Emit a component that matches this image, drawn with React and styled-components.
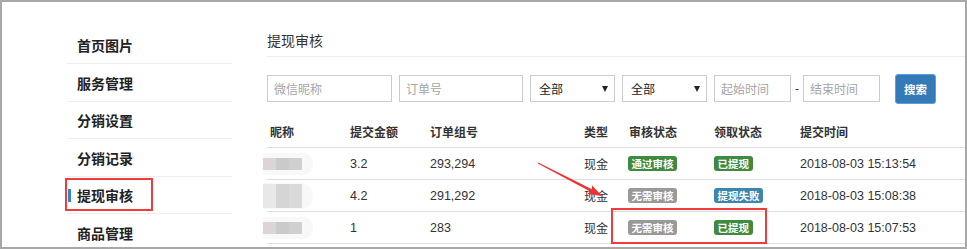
import React from "react";
import styled, { createGlobalStyle } from "styled-components";

const Global = createGlobalStyle`
  html, body { margin: 0; padding: 0; background: #fff; }
  body { font-family: "Liberation Sans", "Noto Sans CJK SC", sans-serif; color: #333; }
  * { box-sizing: border-box; }
`;

const Frame = styled.div`
  position: relative;
  width: 967px;
  height: 249px;
  border: 2px solid #a8a8a8;
  border-bottom-width: 2.5px;
  background: #fff;
  overflow: hidden;
  display: flex;
  align-items: flex-start;
`;

const Sidebar = styled.ul`
  list-style: none;
  margin: 0 0 0 65px;
  padding: 24.5px 0 0 0;
  width: 165px;
  flex: none;
`;

const NavItem = styled.li`
  height: 37.5px;
  border-bottom: 1px solid #eeeeee;
  display: flex;
  align-items: center;
  padding: 1px 0 0 1px;
  font-family: "Noto Sans CJK SC", sans-serif;
  font-size: 14px;
  font-weight: 700;
  color: #222;
`;

const Marker = styled.span`
  width: 3px;
  height: 13px;
  margin-right: 6px;
  background: ${(p) => (p.$active ? "#2f86c9" : "transparent")};
`;

const Main = styled.div`
  margin-left: 35px;
  flex: 1;
  padding-top: 27.5px;
`;

const Title = styled.h2`
  margin: 0;
  font-family: "Noto Sans CJK SC", sans-serif;
  font-weight: 400;
  font-size: 14px;
  line-height: 20px;
  color: #333;
  padding-bottom: 6.5px;
  border-bottom: 1px solid #eeeeee;
`;

const Filters = styled.div`
  display: flex;
  align-items: center;
  margin-top: 18px;
  height: 27px;
`;

const Field = styled.input`
  width: ${(p) => p.$w}px;
  height: 27px;
  margin-right: ${(p) => p.$gap ?? 7}px;
  border: 1px solid #cccccc;
  border-radius: 0;
  padding: 0 6px;
  font-family: "Noto Sans CJK SC", sans-serif;
  font-size: 12px;
  color: #333;
  outline: none;
  &::placeholder { color: #a5a5a5; }
`;

const SelectBox = styled.div`
  width: ${(p) => p.$w}px;
  height: 27px;
  margin-right: 7px;
  border: 1px solid #cccccc;
  display: flex;
  align-items: center;
  justify-content: space-between;
  padding: 0 6px 0 8px;
  font-family: "Noto Sans CJK SC", sans-serif;
  font-size: 12px;
  color: #222;
`;

const Caret = styled.span`
  width: 0;
  height: 0;
  border-left: 3.5px solid transparent;
  border-right: 3.5px solid transparent;
  border-top: 6px solid #222;
`;

const Dash = styled.span`
  width: 12px;
  text-align: center;
  font-size: 12px;
  color: #333;
  margin-right: 0;
`;

const SearchButton = styled.button`
  margin-left: 15px;
  width: 41px;
  height: 30px;
  background: #337ab7;
  border: 1px solid #5f9de0;
  border-radius: 3px;
  color: #fff;
  font-family: "Noto Sans CJK SC", sans-serif;
  font-size: 11.5px;
  font-weight: 700;
  padding: 0;
`;

const Table = styled.div`
  margin-top: 14px;
`;

const Row = styled.div`
  display: grid;
  grid-template-columns: 80px 80px 154px 45px 85px 86px 1fr;
  height: 32px;
  align-items: center;
  border-bottom: 1px solid #dddddd;
  font-size: ${(p) => (p.$head ? "12px" : "12.5px")};
  font-weight: ${(p) => (p.$head ? 700 : 400)};
  font-family: ${(p) =>
    p.$head ? '"Noto Sans CJK SC", sans-serif' : '"Liberation Sans", "Noto Sans CJK SC", sans-serif'};
  color: #333;
`;

const Cell = styled.div`
  padding-left: ${(p) => p.$pl ?? 3}px;
  white-space: nowrap;
  display: flex;
  align-items: center;
`;

const CjkText = styled.span`
  font-family: "Noto Sans CJK SC", sans-serif;
  font-size: 12px;
`;

const Halo = styled.div`
  margin-left: -7px;
  width: 50px;
  height: ${(p) => (p.$tall ? 26 : 22)}px;
  border-radius: 0 13px 13px 0;
  background: #f8f8fa;
  display: flex;
  align-items: center;
`;

const Blur = styled.div`
  width: 39px;
  height: ${(p) => (p.$tall ? 24 : 12)}px;
  background: ${(p) =>
    p.$tall
      ? "linear-gradient(90deg, #e8e8e8 0 33%, #d5d5d5 33% 66%, #dadada 66%)"
      : "linear-gradient(90deg, #dcd4d5 0 33%, #c9caca 33% 66%, #d0d0d1 66%)"};
  filter: blur(0.6px);
`;

const Badge = styled.span`
  display: inline-block;
  height: 15px;
  line-height: 15px;
  padding: 0 3.5px;
  border-radius: 3px;
  font-family: "Noto Sans CJK SC", sans-serif;
  font-size: 10.5px;
  font-weight: 700;
  color: #fff;
  background: ${(p) =>
    p.$tone === "success" ? "#3f8a3f" : p.$tone === "info" ? "#3a87ad" : "#999999"};
`;

const Highlight = styled.div`
  position: absolute;
  left: ${(p) => p.$x}px;
  top: ${(p) => p.$y}px;
  width: ${(p) => p.$w}px;
  height: ${(p) => p.$h}px;
  border: 2px solid #f43b3b;
  pointer-events: none;
`;

const Overlay = styled.svg`
  position: absolute;
  left: -2px;
  top: -2px;
  width: 967px;
  height: 249px;
  pointer-events: none;
`;

const nav = ["首页图片", "服务管理", "分销设置", "分销记录", "提现审核", "商品管理"];

const rows = [
  { amt: "3.2", order: "293,294", audit: ["通过审核", "success"], take: ["已提现", "success"], time: "2018-08-03 15:13:54" },
  { amt: "4.2", order: "291,292", audit: ["无需审核", "muted"], take: ["提现失败", "info"], time: "2018-08-03 15:08:38", tall: true },
  { amt: "1", order: "283", audit: ["无需审核", "muted"], take: ["已提现", "success"], time: "2018-08-03 15:07:53" },
];

export default function App() {
  return (
    <>
      <Global />
      <Frame>
        <Sidebar>
          {nav.map((n) => (
            <NavItem key={n}>
              <Marker $active={n === "提现审核"} />
              {n}
            </NavItem>
          ))}
        </Sidebar>
        <Main>
          <Title>提现审核</Title>
          <Filters>
            <Field $w={125} placeholder="微信昵称" />
            <Field $w={124} placeholder="订单号" />
            <SelectBox $w={85}>全部<Caret /></SelectBox>
            <SelectBox $w={85}>全部<Caret /></SelectBox>
            <Field $w={77} $gap={0} placeholder="起始时间" />
            <Dash>-</Dash>
            <Field $w={77} $gap={0} placeholder="结束时间" />
            <SearchButton>搜索</SearchButton>
          </Filters>
          <Table>
            <Row $head>
              <Cell>昵称</Cell>
              <Cell>提交金额</Cell>
              <Cell>订单组号</Cell>
              <Cell>类型</Cell>
              <Cell>审核状态</Cell>
              <Cell>领取状态</Cell>
              <Cell>提交时间</Cell>
            </Row>
            {rows.map((r, i) => (
              <Row key={i}>
                <Cell>
                  <Halo $tall={r.tall}>
                    <Blur $tall={r.tall} />
                  </Halo>
                </Cell>
                <Cell>{r.amt}</Cell>
                <Cell>{r.order}</Cell>
                <Cell><CjkText>现金</CjkText></Cell>
                <Cell $pl={2}><Badge $tone={r.audit[1]}>{r.audit[0]}</Badge></Cell>
                <Cell><Badge $tone={r.take[1]}>{r.take[0]}</Badge></Cell>
                <Cell>{r.time}</Cell>
              </Row>
            ))}
          </Table>
        </Main>
        <Highlight $x={63} $y={176} $w={88} $h={33} />
        <Highlight $x={609} $y={206} $w={156} $h={36} />
        <Overlay viewBox="0 0 967 249">
          <polygon
            fill="#ee3131"
            points="538.2,162.6 591.9,189.3 591.9,185.2 602,196 587.3,194.0 590.7,191.7 537.8,163.4"
          />
        </Overlay>
      </Frame>
    </>
  );
}
